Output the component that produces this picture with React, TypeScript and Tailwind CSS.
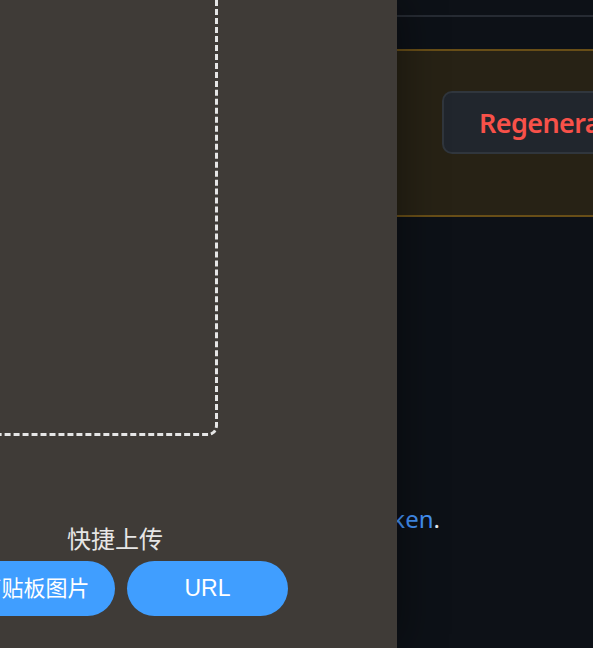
import React from "react";

export default function App() {
  return (
    <div className="relative w-[593px] h-[648px] overflow-hidden bg-[#0d1117]">
      {/* underlying page */}
      <div className="flex flex-col w-[900px]" style={{ fontFamily: '"Noto Sans", "Open Sans", sans-serif' }}>
        <div className="h-[17px] border-b-2 border-[#262b33]" />
        <div className="mt-[32px] h-[168px] border-y-2 border-[#684e17] bg-[#272215] pl-[442px] pt-[40px]">
          <button className="h-[63px] px-[35px] rounded-[10px] border-2 border-[#30363d] bg-[#21262d] text-[#f85149] text-[27px] tracking-[-0.6px] font-semibold leading-none whitespace-nowrap">
            Regenerate token
          </button>
        </div>
        <div className="mt-[284px] w-[440px] text-right text-[24px] leading-[36px] text-[#e6edf3] whitespace-nowrap">
          Please generate a new <span className="text-[#4493f8]">token</span>.
        </div>
      </div>

      {/* drawer overlay */}
      <div
        className="absolute left-0 top-0 h-full w-[397px] bg-[#3f3b37] shadow-[6px_0_40px_rgba(0,0,0,0.35)] flex flex-col"
        style={{ fontFamily: '"Noto Sans CJK SC", "Liberation Sans", sans-serif' }}
      >
        <div className="ml-[-100px] mt-[-30px] w-[318px] h-[466px] shrink-0 rounded-[10px] border-[3px] border-dashed border-[#e6e6e6]" />
        <div className="mt-[85px] w-[230px] text-center text-[24px] leading-[34px] text-[#e6e6e6]">
          快捷上传
        </div>
        <div className="mt-[6px] ml-[-46px] flex gap-[12px]" style={{ fontFamily: '"Liberation Sans", "Noto Sans CJK SC", sans-serif' }}>
          <button className="w-[161px] h-[55px] rounded-full bg-[#409eff] text-white text-[22px] leading-none whitespace-nowrap">
            剪贴板图片
          </button>
          <button className="w-[161px] h-[55px] rounded-full bg-[#409eff] text-white text-[23px] leading-none">
            URL
          </button>
        </div>
      </div>
    </div>
  );
}
